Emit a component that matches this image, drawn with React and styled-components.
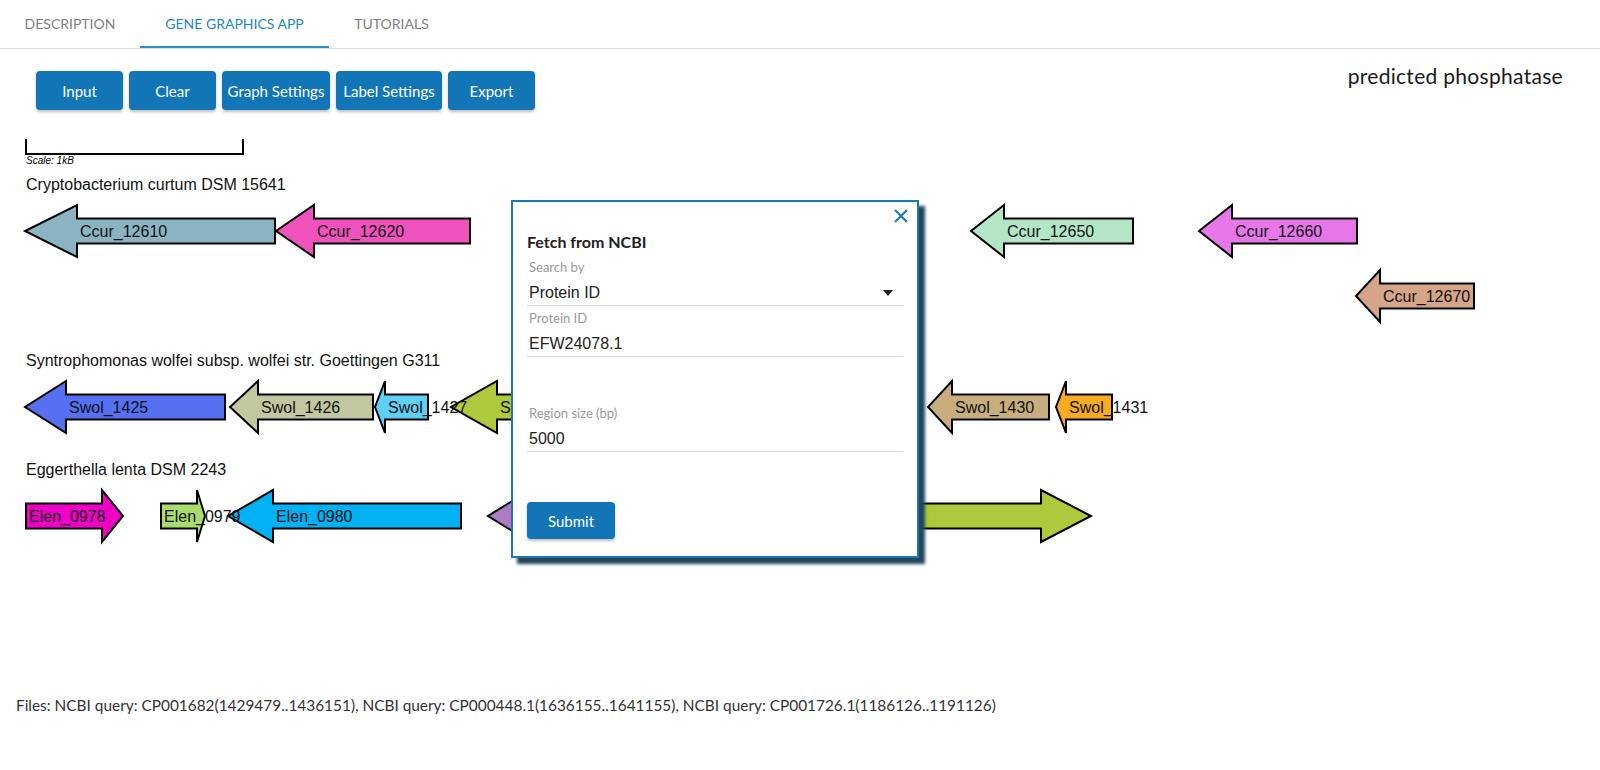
import React from "react";
import styled, { createGlobalStyle } from "styled-components";

const GlobalStyle = createGlobalStyle`
  body {
    margin: 0;
    font-family: Lato, "Open Sans", sans-serif;
    background: #fff;
    color: #222;
  }
`;

const TabBar = styled.div`
  display: flex;
  height: 48px;
  border-bottom: 1px solid #e2e2e2;
`;

const Tab = styled.div`
  width: ${(p) => p.w}px;
  display: flex;
  align-items: center;
  justify-content: center;
  font-size: 14px;
  text-transform: uppercase;
  color: ${(p) => (p.active ? "#1f87c8" : "#808080")};
  border-bottom: 2px solid ${(p) => (p.active ? "#2b8fd1" : "transparent")};
  box-sizing: border-box;
`;

const TopRow = styled.div`
  display: flex;
  justify-content: space-between;
  align-items: flex-start;
  padding: 17px 37px 0 36px;
`;

const ButtonRow = styled.div`
  display: flex;
  gap: 6px;
  margin-top: 5px;
`;

const Button = styled.button`
  width: ${(p) => p.w || 87}px;
  height: ${(p) => p.h || 39}px;
  padding: 0;
  border: none;
  border-radius: 4px;
  background: #1276b6;
  color: #fff;
  font-family: Lato, "Open Sans", sans-serif;
  font-size: 15px;
  font-weight: 400;
  box-shadow: 0 2px 3px rgba(0, 0, 0, 0.25);
  cursor: pointer;
`;

const ProteinTitle = styled.div`
  font-size: 21px;
  line-height: 24px;
  letter-spacing: 0.3px;
  color: #1a1a1a;
  margin-top: -2px;
`;

const ScaleSvg = styled.svg`
  display: block;
  margin-top: 29px;
`;

const GenomeList = styled.div`
  display: flex;
  flex-direction: column;
`;

const Genome = styled.div`
  margin-top: ${(p) => p.gap}px;
`;

const GenomeTitle = styled.div`
  font-family: "Liberation Sans", Arial, sans-serif;
  font-size: 16px;
  line-height: 18px;
  color: #111;
  margin-left: 26px;
`;

const Track = styled.svg`
  display: block;
`;

const Footer = styled.div`
  margin-top: 142px;
  padding-left: 16px;
  font-size: 15.4px;
  line-height: 18px;
  color: #333;
`;

const Modal = styled.div`
  position: absolute;
  left: 511px;
  top: 200px;
  width: 376px;
  height: 354px;
  padding: 0 14px;
  background: #fff;
  border: 2px solid #1a77b5;
  box-shadow: 6px 6px 3px #23455c;
  display: flex;
  flex-direction: column;
`;

const CloseRow = styled.div`
  display: flex;
  justify-content: flex-end;
  align-items: center;
  height: 28px;
  margin-right: -6px;
`;

const ModalTitle = styled.div`
  margin-top: 3px;
  font-size: 16px;
  line-height: 18px;
  font-weight: 700;
  color: #222;
`;

const Field = styled.div`
  margin-top: ${(p) => p.gap}px;
  border-bottom: 1px solid #ddd;
  padding-left: 2px;
`;

const FieldLabel = styled.div`
  font-size: 13px;
  line-height: 14px;
  color: #9a9a9a;
`;

const FieldValue = styled.div`
  margin-top: 7px;
  display: flex;
  justify-content: space-between;
  align-items: center;
  font-family: "Liberation Sans", Arial, sans-serif;
  font-size: 16px;
  line-height: 24px;
  color: #222;
`;

const SubmitWrap = styled.div`
  margin-top: 50px;
`;

const genomes = [
  {
    name: "Cryptobacterium curtum DSM 15641",
    rows: 2,
    gap: 9,
    genes: [
      { label: "Ccur_12610", dir: -1, tip: 25, base: 77, end: 275, row: 0, color: "#8bb4c3" },
      { label: "Ccur_12620", dir: -1, tip: 276, base: 314, end: 470, row: 0, color: "#ef52bd" },
      { label: "Ccur_12650", dir: -1, tip: 971, base: 1004, end: 1133, row: 0, color: "#b3e6c7" },
      { label: "Ccur_12660", dir: -1, tip: 1199, base: 1232, end: 1357, row: 0, color: "#e577e9" },
      { label: "Ccur_12670", dir: -1, tip: 1356, base: 1380, end: 1474, row: 1, color: "#d6a487" },
    ],
  },
  {
    name: "Syntrophomonas wolfei subsp. wolfei str. Goettingen G311",
    rows: 1,
    gap: 18,
    genes: [
      { label: "Swol_1425", dir: -1, tip: 25, base: 66, end: 225, row: 0, color: "#5570f1" },
      { label: "Swol_1426", dir: -1, tip: 230, base: 258, end: 373, row: 0, color: "#c3c7a0" },
      { label: "Swol_1427", dir: -1, tip: 375, base: 385, end: 428, row: 0, color: "#5fd0f5" },
      { label: "Swol_1428", dir: -1, tip: 451, base: 497, end: 650, row: 0, color: "#aec93b" },
      { label: "Swol_1430", dir: -1, tip: 928, base: 952, end: 1049, row: 0, color: "#c8ae7e" },
      { label: "Swol_1431", dir: -1, tip: 1056, base: 1066, end: 1112, row: 0, color: "#f6ab22" },
    ],
  },
  {
    name: "Eggerthella lenta DSM 2243",
    rows: 1,
    gap: 16,
    genes: [
      { label: "Elen_0978", dir: 1, tip: 123, base: 102, end: 26, row: 0, color: "#f000c6" },
      { label: "Elen_0979", dir: 1, tip: 205, base: 197, end: 161, row: 0, color: "#a9dc6d" },
      { label: "Elen_0980", dir: -1, tip: 228, base: 273, end: 461, row: 0, color: "#00b1f4" },
      // these two run under the dialog, their labels are covered anyway
      { label: "Elen_0981", dir: -1, tip: 488, base: 530, end: 690, row: 0, color: "#b07cc1", covered: true },
      { label: "Elen_0982", dir: 1, tip: 1091, base: 1041, end: 700, row: 0, color: "#aec93c", covered: true },
    ],
  },
];

const HEAD = 26;
const BODY = 12.5;

const arrowPoints = (g, cy) =>
  [
    [g.end, cy - BODY],
    [g.base, cy - BODY],
    [g.base, cy - HEAD],
    [g.tip, cy],
    [g.base, cy + HEAD],
    [g.base, cy + BODY],
    [g.end, cy + BODY],
  ]
    .map((p) => p.join(","))
    .join(" ");

const labelX = (g) => (g.dir < 0 ? g.base + 3 : g.end + 3);

const GeneTrack = ({ genome }) => {
  const height = genome.rows * 65 + 10;
  const cy = (row) => 37 + row * 65;
  return (
    <Track width="1600" height={height}>
      {genome.genes.map((g) => (
        <polygon
          key={g.label}
          points={arrowPoints(g, cy(g.row))}
          fill={g.color}
          stroke="#000"
          strokeWidth="2"
        />
      ))}
      {genome.genes
        .filter((g) => !g.covered)
        .map((g) => (
          <text
            key={g.label + "-t"}
            x={labelX(g)}
            y={cy(g.row) + 6}
            fontFamily="'Liberation Sans', Arial, sans-serif"
            fontSize="16"
            fill="#111"
          >
            {g.label}
          </text>
        ))}
    </Track>
  );
};

const CloseIcon = () => (
  <svg width="16" height="16" viewBox="0 0 16 16">
    <path d="M2 2 L14 14 M14 2 L2 14" stroke="#1a77b5" strokeWidth="2" />
  </svg>
);

const Caret = () => (
  <svg width="12" height="8" viewBox="0 0 12 8" style={{ marginRight: 9 }}>
    <polygon points="1,1 11,1 6,7" fill="#222" />
  </svg>
);

const App = () => {
  return (
    <>
      <GlobalStyle />
      <TabBar>
        <Tab w={140}>Description</Tab>
        <Tab w={189} active>
          Gene Graphics App
        </Tab>
        <Tab w={125}>Tutorials</Tab>
      </TabBar>

      <TopRow>
        <ButtonRow>
          <Button>Input</Button>
          <Button>Clear</Button>
          <Button w={108}>Graph Settings</Button>
          <Button w={106}>Label Settings</Button>
          <Button>Export</Button>
        </ButtonRow>
        <ProteinTitle>predicted phosphatase</ProteinTitle>
      </TopRow>

      <ScaleSvg width="250" height="28">
        <path d="M26 0 V15 H243 V0" fill="none" stroke="#000" strokeWidth="2" />
        <text
          x="26"
          y="25"
          fontSize="10"
          fontStyle="italic"
          fontFamily="'Liberation Sans', Arial, sans-serif"
          fill="#000"
        >
          Scale: 1kB
        </text>
      </ScaleSvg>

      <GenomeList>
        {genomes.map((gn) => (
          <Genome key={gn.name} gap={gn.gap}>
            <GenomeTitle>{gn.name}</GenomeTitle>
            <GeneTrack genome={gn} />
          </Genome>
        ))}
      </GenomeList>

      <Footer>
        Files: NCBI query: CP001682(1429479..1436151), NCBI query: CP000448.1(1636155..1641155), NCBI
        query: CP001726.1(1186126..1191126)
      </Footer>

      <Modal>
        <CloseRow>
          <CloseIcon />
        </CloseRow>
        <ModalTitle>Fetch from NCBI</ModalTitle>
        <Field gap={9}>
          <FieldLabel>Search by</FieldLabel>
          <FieldValue>
            <span>Protein ID</span>
            <Caret />
          </FieldValue>
        </Field>
        <Field gap={5}>
          <FieldLabel>Protein ID</FieldLabel>
          <FieldValue>EFW24078.1</FieldValue>
        </Field>
        <Field gap={49}>
          <FieldLabel>Region size (bp)</FieldLabel>
          <FieldValue>5000</FieldValue>
        </Field>
        <SubmitWrap>
          <Button w={88} h={37}>
            Submit
          </Button>
        </SubmitWrap>
      </Modal>
    </>
  );
};

export default App;
